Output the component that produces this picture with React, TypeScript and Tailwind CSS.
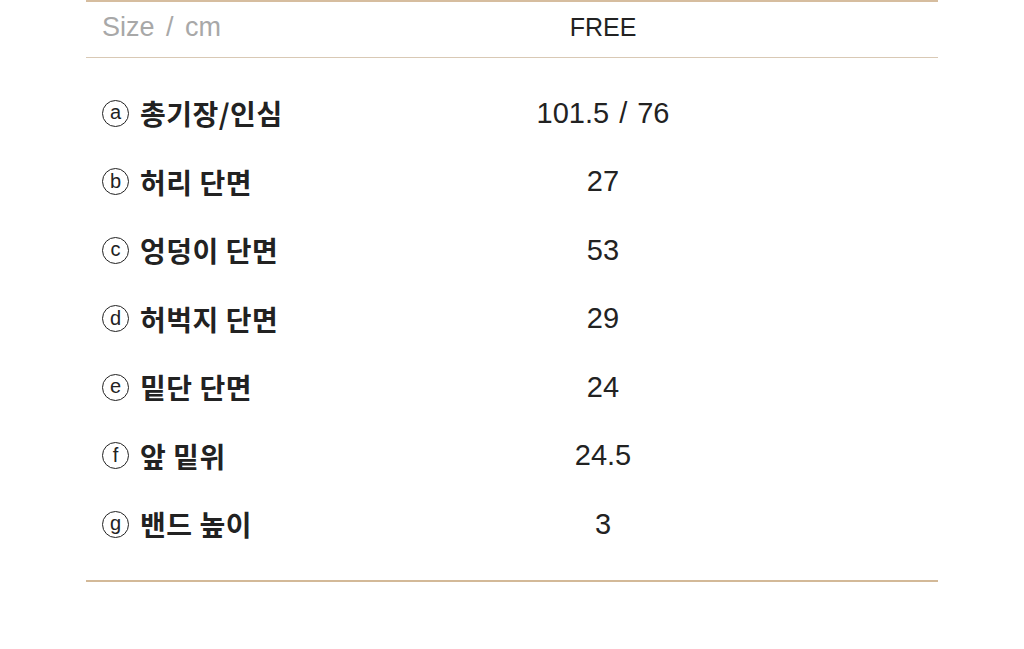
import React from "react";

const rows: [string, string, string][] = [
  ["a", "총기장/인심", "101.5 / 76"],
  ["b", "허리 단면", "27"],
  ["c", "엉덩이 단면", "53"],
  ["d", "허벅지 단면", "29"],
  ["e", "밑단 단면", "24"],
  ["f", "앞 밑위", "24.5"],
  ["g", "밴드 높이", "3"],
];

export default function App() {
  return (
    <div
      className="w-[1024px] h-[649px] bg-white"
      style={{ fontFamily: '"Liberation Sans", "Noto Sans CJK KR", sans-serif' }}
    >
      <div className="ml-[86px] w-[852px]">
        <div className="border-t-2 border-[#d6bd9f] border-b border-b-[#d9c9b5] h-[58px] flex items-center pb-[4px]">
          <div className="w-[420px] pl-4 text-[27px] text-[#a8a8a8] [word-spacing:4px]">Size / cm</div>
          <div className="w-[194px] text-center text-[25px] text-[#222]">FREE</div>
        </div>
        <div className="pt-[21px] pb-[21px] border-b-2 border-[#d3b998]">
          {rows.map(([c, label, v]) => (
            <div key={c} className="h-[68.5px] flex items-center">
              <div className="w-[420px] pl-4 flex items-center text-[#222]">
                <span className="w-[27px] h-[27px] rounded-full border-[1.6px] border-[#222] flex items-center justify-center text-[20px] leading-none pb-[2px]">
                  {c}
                </span>
                <span
                  className="ml-[11px] text-[28px] font-semibold tracking-[0.5px]"
                  style={{ fontFamily: '"Noto Sans CJK KR", sans-serif' }}
                >
                  {label}
                </span>
              </div>
              <div className="w-[194px] text-center text-[29px] text-[#222] [word-spacing:2px]">{v}</div>
            </div>
          ))}
        </div>
      </div>
    </div>
  );
}
